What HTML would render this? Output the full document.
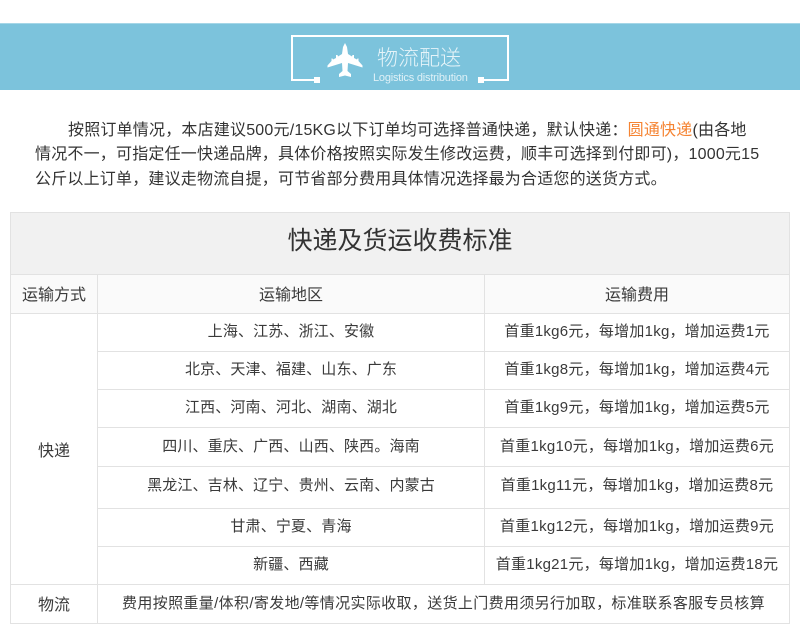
<!DOCTYPE html>
<html lang="zh"><head><meta charset="utf-8"><title>物流配送</title>
<style>
html,body{margin:0;padding:0;background:#fff}
#p{position:relative;width:800px;height:644px;overflow:hidden;background:#fff;font-family:"Liberation Sans","Noto Sans CJK SC",sans-serif;color:#3a3a3a}
#p div{position:absolute}
.l{background:#e2e2e2}
.t{white-space:nowrap;text-align:center;font-size:15px;line-height:20px;height:20px}
.a{left:98px;width:386px;letter-spacing:.15px}
.b{left:485px;width:304px;letter-spacing:.25px}
.h{font-size:16px}
.p{left:0;white-space:nowrap;font-size:16px;letter-spacing:.2px;line-height:24px;height:24px;color:#333}
</style></head><body><div id="p">
<div style="left:0;top:23px;width:800px;height:67px;background:#7cc3dc"></div>
<div style="left:0;top:23px;width:800px;height:1px;background:#a5d6e7"></div>
<div style="left:291px;top:35px;width:218px;height:2px;background:#fff"></div>
<div style="left:291px;top:35px;width:2px;height:46px;background:#fff"></div>
<div style="left:507px;top:35px;width:2px;height:46px;background:#fff"></div>
<div style="left:291px;top:79px;width:28px;height:2px;background:#fff"></div>
<div style="left:481px;top:79px;width:28px;height:2px;background:#fff"></div>
<div style="left:314px;top:77px;width:6px;height:6px;background:#fff"></div>
<div style="left:478px;top:77px;width:6px;height:6px;background:#fff"></div>
<svg style="position:absolute;left:325px;top:40px" width="40" height="40" viewBox="0 0 40 40"><path fill="#fff" d="M20 3L22 7L23 14L27 16.500L27.500 15H29V18L32 19.500L32.500 18.500H33.500V21L37.500 25.500V27.500L23 23L22.500 31L26 34V37L20 35.500L14 37V34L17.500 31L17 23L2.500 27.500V25.500L6.500 21V18.500H7.500L8 19.500L11 18V15H12.500L13 16.500L17 14L18 7Z"/></svg>
<div style="left:377px;top:45px;width:90px;white-space:nowrap;font-size:21px;line-height:28px;color:#e6f4f9;font-weight:300">物流配送</div>
<div style="left:373px;top:71px;width:96px;white-space:nowrap;font-size:11px;line-height:14px;color:#dff1f7;letter-spacing:-.2px">Logistics distribution</div>

<div class="p" style="left:68px;top:119px">按照订单情况，本店建议500元/15KG以下订单均可选择普通快递，默认快递：<span style="color:#f58433">圆通快递</span>(由各地</div>
<div class="p" style="left:35px;top:143px">情况不一，可指定任一快递品牌，具体价格按照实际发生修改运费，顺丰可选择到付即可)，1000元15</div>
<div class="p" style="left:35px;top:168px">公斤以上订单，建议走物流自提，可节省部分费用具体情况选择最为合适您的送货方式。</div>

<div style="left:11px;top:212px;width:778px;height:62px;background:#f1f1f1"></div>
<div style="left:11px;top:275px;width:778px;height:38px;background:#fafafa"></div>
<div class="l" style="left:10px;top:212px;width:780px;height:1px"></div>
<div class="l" style="left:10px;top:274px;width:780px;height:1px"></div>
<div class="l" style="left:10px;top:313px;width:780px;height:1px"></div>
<div class="l" style="left:97px;top:351px;width:693px;height:1px"></div>
<div class="l" style="left:97px;top:389px;width:693px;height:1px"></div>
<div class="l" style="left:97px;top:427px;width:693px;height:1px"></div>
<div class="l" style="left:97px;top:466px;width:693px;height:1px"></div>
<div class="l" style="left:97px;top:508px;width:693px;height:1px"></div>
<div class="l" style="left:97px;top:546px;width:693px;height:1px"></div>
<div class="l" style="left:10px;top:584px;width:780px;height:1px"></div>
<div class="l" style="left:10px;top:623px;width:780px;height:1px"></div>
<div class="l" style="left:10px;top:212px;width:1px;height:412px"></div>
<div class="l" style="left:789px;top:212px;width:1px;height:412px"></div>
<div class="l" style="left:97px;top:275px;width:1px;height:349px"></div>
<div class="l" style="left:484px;top:275px;width:1px;height:310px"></div>

<div class="t" style="left:11px;width:778px;top:225px;height:32px;line-height:32px;font-size:25px;color:#333">快递及货运收费标准</div>
<div class="t h" style="left:11px;width:86px;top:286px">运输方式</div>
<div class="t h" style="left:98px;width:386px;top:286px">运输地区</div>
<div class="t h" style="left:485px;width:304px;top:286px">运输费用</div>
<div class="t h" style="left:11px;width:86px;top:442px">快递</div>
<div class="t h" style="left:11px;width:86px;top:596px">物流</div>

<div class="t a" style="top:322px">上海、江苏、浙江、安徽</div>
<div class="t b" style="top:322px">首重1kg6元，每增加1kg，增加运费1元</div>
<div class="t a" style="top:360px">北京、天津、福建、山东、广东</div>
<div class="t b" style="top:360px">首重1kg8元，每增加1kg，增加运费4元</div>
<div class="t a" style="top:398px">江西、河南、河北、湖南、湖北</div>
<div class="t b" style="top:398px">首重1kg9元，每增加1kg，增加运费5元</div>
<div class="t a" style="top:437px">四川、重庆、广西、山西、陕西。海南</div>
<div class="t b" style="top:437px">首重1kg10元，每增加1kg，增加运费6元</div>
<div class="t a" style="top:476px">黑龙江、吉林、辽宁、贵州、云南、内蒙古</div>
<div class="t b" style="top:476px">首重1kg11元，每增加1kg，增加运费8元</div>
<div class="t a" style="top:517px">甘肃、宁夏、青海</div>
<div class="t b" style="top:517px">首重1kg12元，每增加1kg，增加运费9元</div>
<div class="t a" style="top:555px">新疆、西藏</div>
<div class="t b" style="top:555px">首重1kg21元，每增加1kg，增加运费18元</div>
<div class="t" style="left:98px;width:691px;top:594px;letter-spacing:.35px">费用按照重量/体积/寄发地/等情况实际收取，送货上门费用须另行加取，标准联系客服专员核算</div>
</div></body></html>
